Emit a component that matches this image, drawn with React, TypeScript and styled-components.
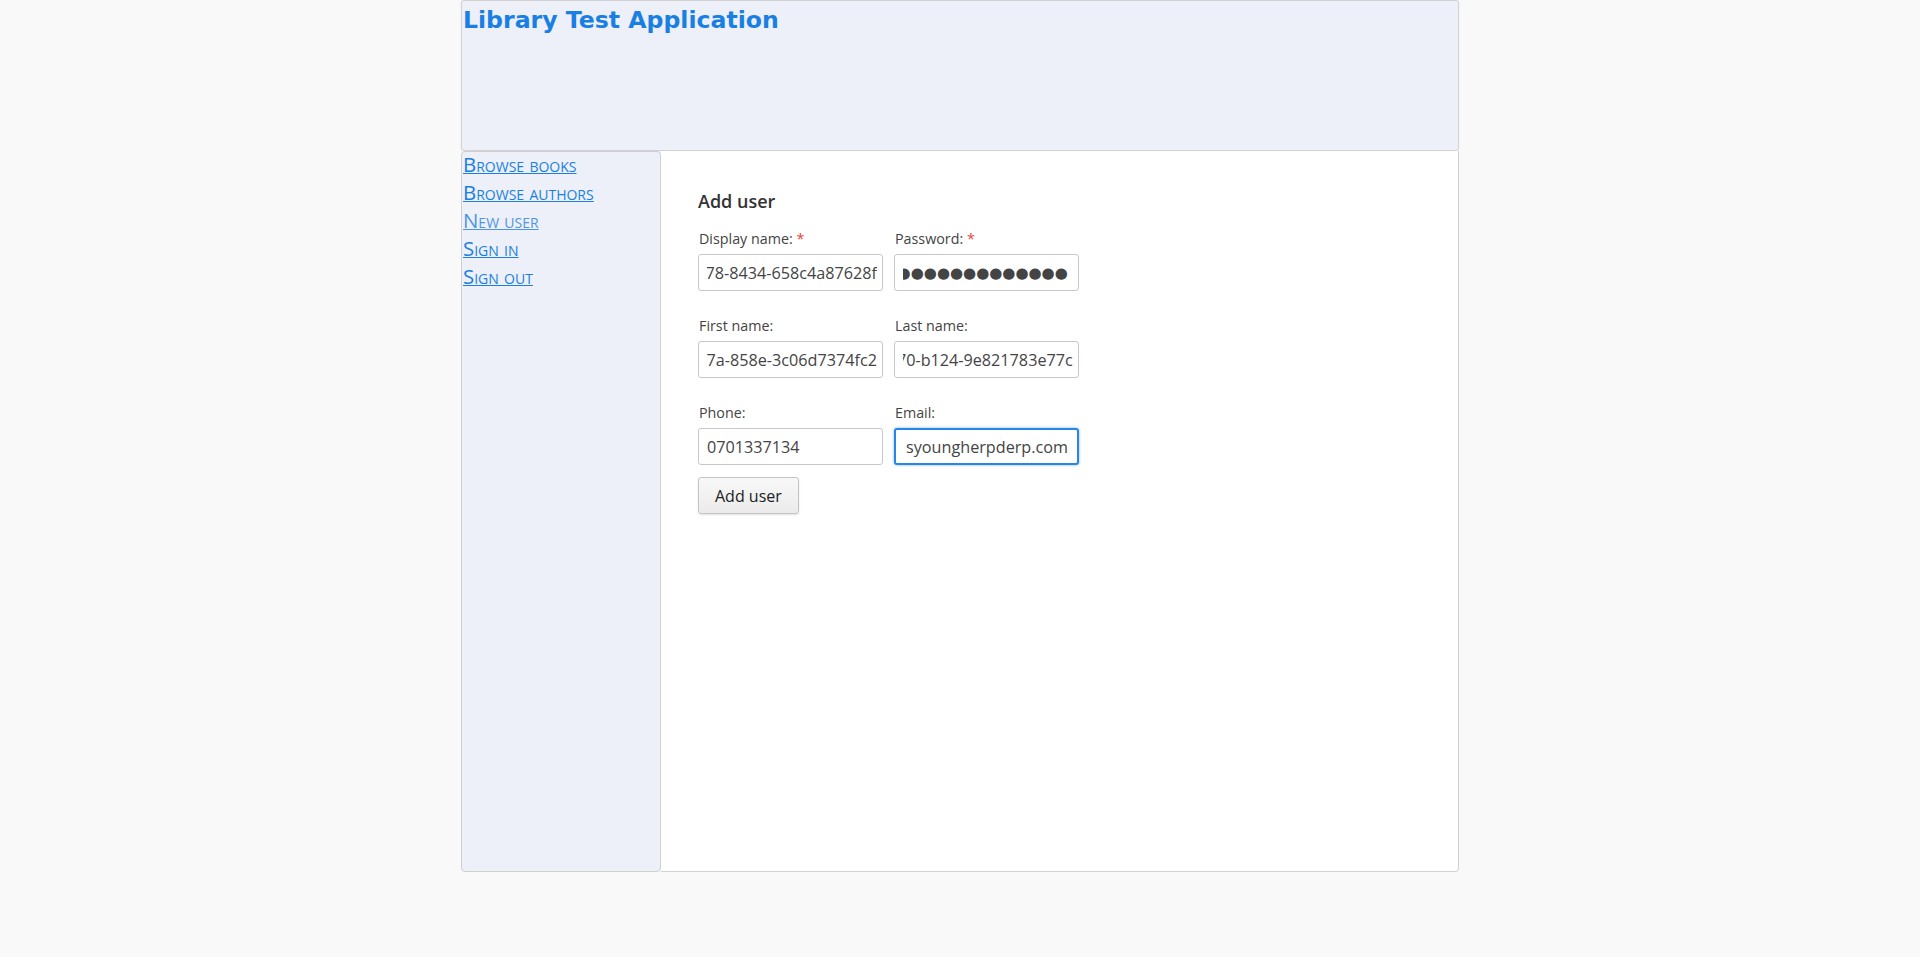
import React, { useEffect, useRef } from "react";
import styled, { createGlobalStyle } from "styled-components";

const Global = createGlobalStyle`
  html, body { margin: 0; padding: 0; background: #f9f9f9; }
  body { font-family: "Open Sans", sans-serif; color: #333; }
`;

const Page = styled.div`
  width: 998px;
  margin: 0 auto;
  display: flex;
  flex-direction: column;
`;

const Header = styled.header`
  height: 151px;
  box-sizing: border-box;
  background: #edf0f8;
  border: 1px solid #d2d2d2;
  border-radius: 3px;
  box-shadow: 0 0 2px rgba(0,0,0,0.08);
`;

const Title = styled.h1`
  margin: 0;
  padding: 3px 0 0 1px;
  font-family: "DejaVu Sans", sans-serif;
  font-weight: bold;
  font-size: 23.6px;
  line-height: 32px;
  color: #1a7fe3;
`;

const Main = styled.div`
  display: flex;
  height: 721px;
`;

const Sidebar = styled.nav`
  width: 200px;
  box-sizing: border-box;
  background: #edf0f8;
  border: 1px solid #cfcfcf;
  border-radius: 4px;
  display: flex;
  flex-direction: column;
  gap: 5px;
  padding: 1px 0 0 1px;
`;

const NavLink = styled.a<{ $light?: boolean }>`
  font-family: "Open Sans", sans-serif;
  font-variant: small-caps;
  font-size: 20.4px;
  line-height: 23px;
  color: ${(p) => (p.$light ? "#4f95e6" : "#1a7fe0")};
  text-decoration: underline;
  text-decoration-thickness: 1px;
  align-self: flex-start;
`;

const Content = styled.main`
  flex: 1;
  background: #fff;
  border-right: 1px solid #d2d2d2;
  border-bottom: 1px solid #d2d2d2;
  border-bottom-right-radius: 4px;
  padding: 38px 37px;
`;

const Heading = styled.h2`
  margin: 0 0 16px;
  font-size: 18px;
  font-weight: 600;
  line-height: 24px;
  color: #333;
`;

const Form = styled.form`
  display: flex;
  flex-direction: column;
  align-items: flex-start;
`;

const Row = styled.div`
  display: flex;
  gap: 11px;
  margin-bottom: 25px;
  &:last-of-type { margin-bottom: 12px; }
`;

const Field = styled.div`
  display: flex;
  flex-direction: column;
  width: 185px;
`;

const Label = styled.label`
  font-size: 14.3px;
  line-height: 20px;
  margin-bottom: 5px;
  padding-left: 1px;
  color: #444;
`;

const Required = styled.span`
  color: #e8453c;
`;

const Input = styled.input<{ $focused?: boolean; $dots?: boolean }>`
  box-sizing: border-box;
  width: 100%;
  height: 37px;
  padding: ${(p) => (p.$focused ? "0 6px 0 10px" : p.$dots ? "0 10px 0 8px" : "0 5px 0 8px")};
  font-family: ${(p) => (p.$dots ? '"DejaVu Sans", sans-serif' : '"Open Sans", sans-serif')};
  font-size: ${(p) => (p.$dots ? "15px" : "16.2px")};
  letter-spacing: 0;
  color: #444;
  background: #fff;
  border: ${(p) => (p.$focused ? "2px solid #2a86e4" : "1px solid #c8c8c8")};
  border-radius: 3px;
  outline: none;
  box-shadow: ${(p) => (p.$focused ? "0 0 3px rgba(26,127,224,0.55)" : "none")};
`;

const Button = styled.button`
  height: 37px;
  padding: 0 16px;
  font-family: "Open Sans", sans-serif;
  font-size: 16px;
  color: #222;
  background: linear-gradient(#f8f8f8, #ebebeb);
  border: 1px solid #c4c4c4;
  border-radius: 3px;
  box-shadow: 0 1px 2px rgba(0,0,0,0.12);
`;

type InProps = React.InputHTMLAttributes<HTMLInputElement> & { $focused?: boolean; $dots?: boolean };

function ScrolledInput(props: InProps) {
  const ref = useRef<HTMLInputElement>(null);
  useEffect(() => {
    if (ref.current) ref.current.scrollLeft = ref.current.scrollWidth;
  }, []);
  return <Input ref={ref} readOnly {...props} />;
}

export default function App() {
  return (
    <>
      <Global />
      <Page>
        <Header>
          <Title>Library Test Application</Title>
        </Header>
        <Main>
          <Sidebar>
            <NavLink href="#">Browse books</NavLink>
            <NavLink href="#">Browse authors</NavLink>
            <NavLink href="#" $light>New user</NavLink>
            <NavLink href="#">Sign in</NavLink>
            <NavLink href="#">Sign out</NavLink>
          </Sidebar>
          <Content>
            <Heading>Add user</Heading>
            <Form onSubmit={(e) => e.preventDefault()}>
              <Row>
                <Field>
                  <Label>Display name: <Required>*</Required></Label>
                  <ScrolledInput defaultValue="9a1c2e4d-5b6f-4878-8434-658c4a87628f" />
                </Field>
                <Field>
                  <Label>Password: <Required>*</Required></Label>
                  <ScrolledInput $dots defaultValue="●●●●●●●●●●●●●●●●●●●●" />
                </Field>
              </Row>
              <Row>
                <Field>
                  <Label>First name:</Label>
                  <ScrolledInput defaultValue="c41d93b0-2e5f-4b7a-858e-3c06d7374fc2" />
                </Field>
                <Field>
                  <Label>Last name:</Label>
                  <ScrolledInput defaultValue="5e8a1f3c-9d27-4170-b124-9e821783e77c" />
                </Field>
              </Row>
              <Row>
                <Field>
                  <Label>Phone:</Label>
                  <Input readOnly defaultValue="0701337134" />
                </Field>
                <Field>
                  <Label>Email:</Label>
                  <Input readOnly $focused defaultValue="syoungherpderp.com" />
                </Field>
              </Row>
              <Button type="button">Add user</Button>
            </Form>
          </Content>
        </Main>
      </Page>
    </>
  );
}
